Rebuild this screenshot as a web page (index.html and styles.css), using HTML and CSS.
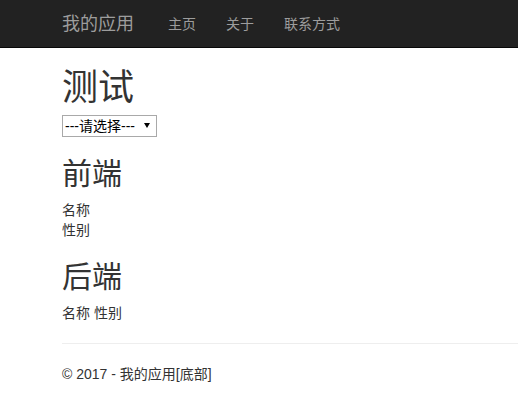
FILE: index.html
```html
<!DOCTYPE html>
<html>
<head>
    <meta charset="UTF-8">
    <title>测试 - 我的应用</title>
    <link rel="stylesheet" href="styles.css">
</head>
<body>
    <div class="navbar">
        <div class="container nav-inner">
            <a class="brand" href="#">我的应用</a>
            <ul class="nav">
                <li><a href="#">主页</a></li>
                <li><a href="#">关于</a></li>
                <li><a href="#">联系方式</a></li>
            </ul>
        </div>
    </div>

    <div class="container body-content">
        <h1>测试</h1>
        <span class="select-wrap">
            <select class="picker">
                <option>---请选择---</option>
            </select>
        </span>

        <h2>前端</h2>
        <div>名称</div>
        <div>性别</div>

        <h2>后端</h2>
        <span>名称</span> <span>性别</span>

        <hr>
        <footer>
            <p>&copy; 2017 - 我的应用[底部]</p>
        </footer>
    </div>
</body>
</html>
```

FILE: styles.css
```css
body {
    margin: 0;
    font-family: "Liberation Sans", Arial, "Noto Sans CJK SC", sans-serif;
    font-size: 14px;
    line-height: 20px;
    color: #333;
    background: #fff;
}
.container {
    padding-left: 62px;
}
.navbar {
    height: 47px;
    background-color: #222;
    border-bottom: 1px solid #080808;
}
.nav-inner {
    display: flex;
    align-items: center;
    height: 100%;
}
.navbar a {
    color: #9d9d9d;
    text-decoration: none;
}
.brand {
    font-size: 18px;
    margin-right: 19px;
}
.nav {
    display: flex;
    list-style: none;
    margin: 0;
    padding: 0;
}
.nav li a {
    display: block;
    padding: 0 15px;
}
h1, h2 {
    font-weight: 400;
    line-height: 1.1;
    margin: 20px 0 10px;
}
h1 {
    font-size: 36px;
    margin-bottom: 7px;
}
h2 {
    font-size: 30px;
}
.select-wrap {
    position: relative;
    display: inline-block;
}
.picker {
    -webkit-appearance: none;
    appearance: none;
    width: 95px;
    height: 22px;
    margin: 0;
    padding: 0 16px 0 2px;
    border: 1px solid #a9a9a9;
    border-radius: 0;
    background: #fff;
    font-family: inherit;
    font-size: 14px;
    color: #000;
}
.select-wrap::after {
    content: "";
    position: absolute;
    right: 7px;
    top: 8px;
    border-left: 3px solid transparent;
    border-right: 3px solid transparent;
    border-top: 5px solid #000;
    pointer-events: none;
}
hr {
    margin: 20px 0;
    border: 0;
    border-top: 1px solid #eee;
}
footer p {
    margin: 0 0 10px;
}
```
